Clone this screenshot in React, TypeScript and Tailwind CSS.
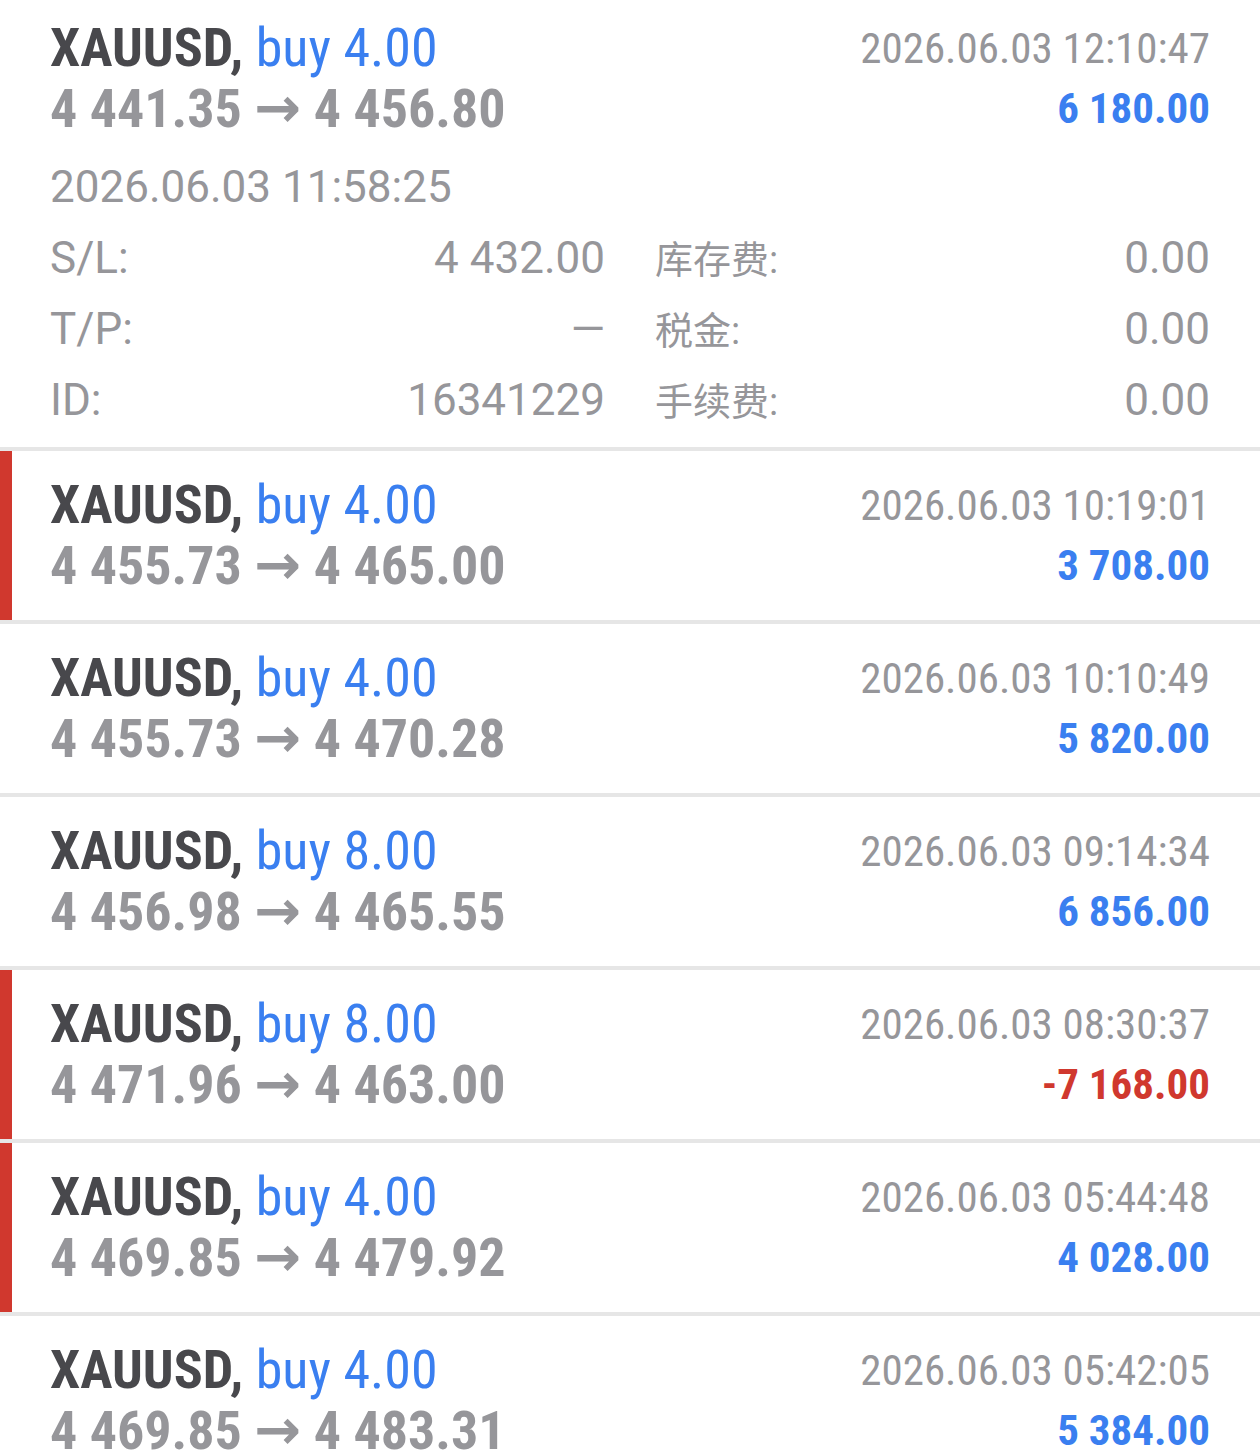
import React from "react";

type Deal = {
  symbol: string;
  side: string;
  volume: string;
  open: string;
  close: string;
  time: string;
  profit: string;
  marked?: boolean;
};

const DEALS: Deal[] = [
  { symbol: "XAUUSD", side: "buy", volume: "4.00", open: "4 455.73", close: "4 465.00", time: "2026.06.03 10:19:01", profit: "3 708.00", marked: true },
  { symbol: "XAUUSD", side: "buy", volume: "4.00", open: "4 455.73", close: "4 470.28", time: "2026.06.03 10:10:49", profit: "5 820.00" },
  { symbol: "XAUUSD", side: "buy", volume: "8.00", open: "4 456.98", close: "4 465.55", time: "2026.06.03 09:14:34", profit: "6 856.00" },
  { symbol: "XAUUSD", side: "buy", volume: "8.00", open: "4 471.96", close: "4 463.00", time: "2026.06.03 08:30:37", profit: "-7 168.00", marked: true },
  { symbol: "XAUUSD", side: "buy", volume: "4.00", open: "4 469.85", close: "4 479.92", time: "2026.06.03 05:44:48", profit: "4 028.00", marked: true },
  { symbol: "XAUUSD", side: "buy", volume: "4.00", open: "4 469.85", close: "4 483.31", time: "2026.06.03 05:42:05", profit: "5 384.00" },
];

const cond = "[font-family:'Roboto_Condensed',Roboto,sans-serif] font-stretch-condensed";

function Head({ d }: { d: Deal }) {
  const loss = d.profit.startsWith("-");
  return (
    <div className="flex justify-between">
      <div className={cond}>
        <div className="text-[54px] leading-[60px] whitespace-nowrap">
          <span className="font-bold text-[#48484c]">{d.symbol},</span>{" "}
          <span className="text-[#3a7ff0]">
            {d.side} {d.volume}
          </span>
        </div>
        <div className="text-[54px] leading-[60px] font-bold text-[#96969a] whitespace-nowrap">
          {d.open}{" "}
          <span className="[font-family:'DejaVu_Sans',sans-serif] font-stretch-normal text-[56px]">→</span>{" "}
          {d.close}
        </div>
      </div>
      <div className={`${cond} text-right`}>
        <div className="text-[43px] leading-[60px] text-[#96969a] whitespace-nowrap">{d.time}</div>
        <div
          className={`text-[43px] leading-[60px] font-bold whitespace-nowrap ${
            loss ? "text-[#d0382e]" : "text-[#3a7ff0]"
          }`}
        >
          {d.profit}
        </div>
      </div>
    </div>
  );
}

function Detail({ label, value, cjk }: { label: string; value: string; cjk?: boolean }) {
  return (
    <div className="flex justify-between items-baseline h-[71px] leading-[71px]">
      <span className={cjk ? "text-[38px]" : ""}>{label}</span>
      <span>{value}</span>
    </div>
  );
}

export default function App() {
  const first: Deal = {
    symbol: "XAUUSD",
    side: "buy",
    volume: "4.00",
    open: "4 441.35",
    close: "4 456.80",
    time: "2026.06.03 12:10:47",
    profit: "6 180.00",
  };

  return (
    <div className="w-[1260px] h-[1454px] overflow-hidden bg-white [font-family:Roboto,'Noto_Sans_CJK_SC',sans-serif]">
      {/* expanded position */}
      <div className="px-[50px] pt-[18px] pb-[11px]">
        <Head d={first} />
        <div className="mt-[18px] text-[44px] leading-[60px] text-[#96969a]">2026.06.03 11:58:25</div>
        <div className="mt-[6px] grid grid-cols-2 gap-x-[50px] text-[44px] text-[#96969a]">
          <div>
            <Detail label="S/L:" value="4 432.00" />
            <Detail label="T/P:" value="—" />
            <Detail label="ID:" value="16341229" />
          </div>
          <div>
            <Detail label="库存费:" value="0.00" cjk />
            <Detail label="税金:" value="0.00" cjk />
            <Detail label="手续费:" value="0.00" cjk />
          </div>
        </div>
      </div>

      {DEALS.map((d, i) => (
        <div key={i} className="border-t-4 border-[#e6e6e6] flex">
          <div className={`w-[12px] shrink-0 ${d.marked ? "bg-[#d0382e]" : "bg-white"}`} />
          <div className="flex-1 pl-[38px] pr-[50px] py-[24px]">
            <Head d={d} />
          </div>
        </div>
      ))}
    </div>
  );
}
